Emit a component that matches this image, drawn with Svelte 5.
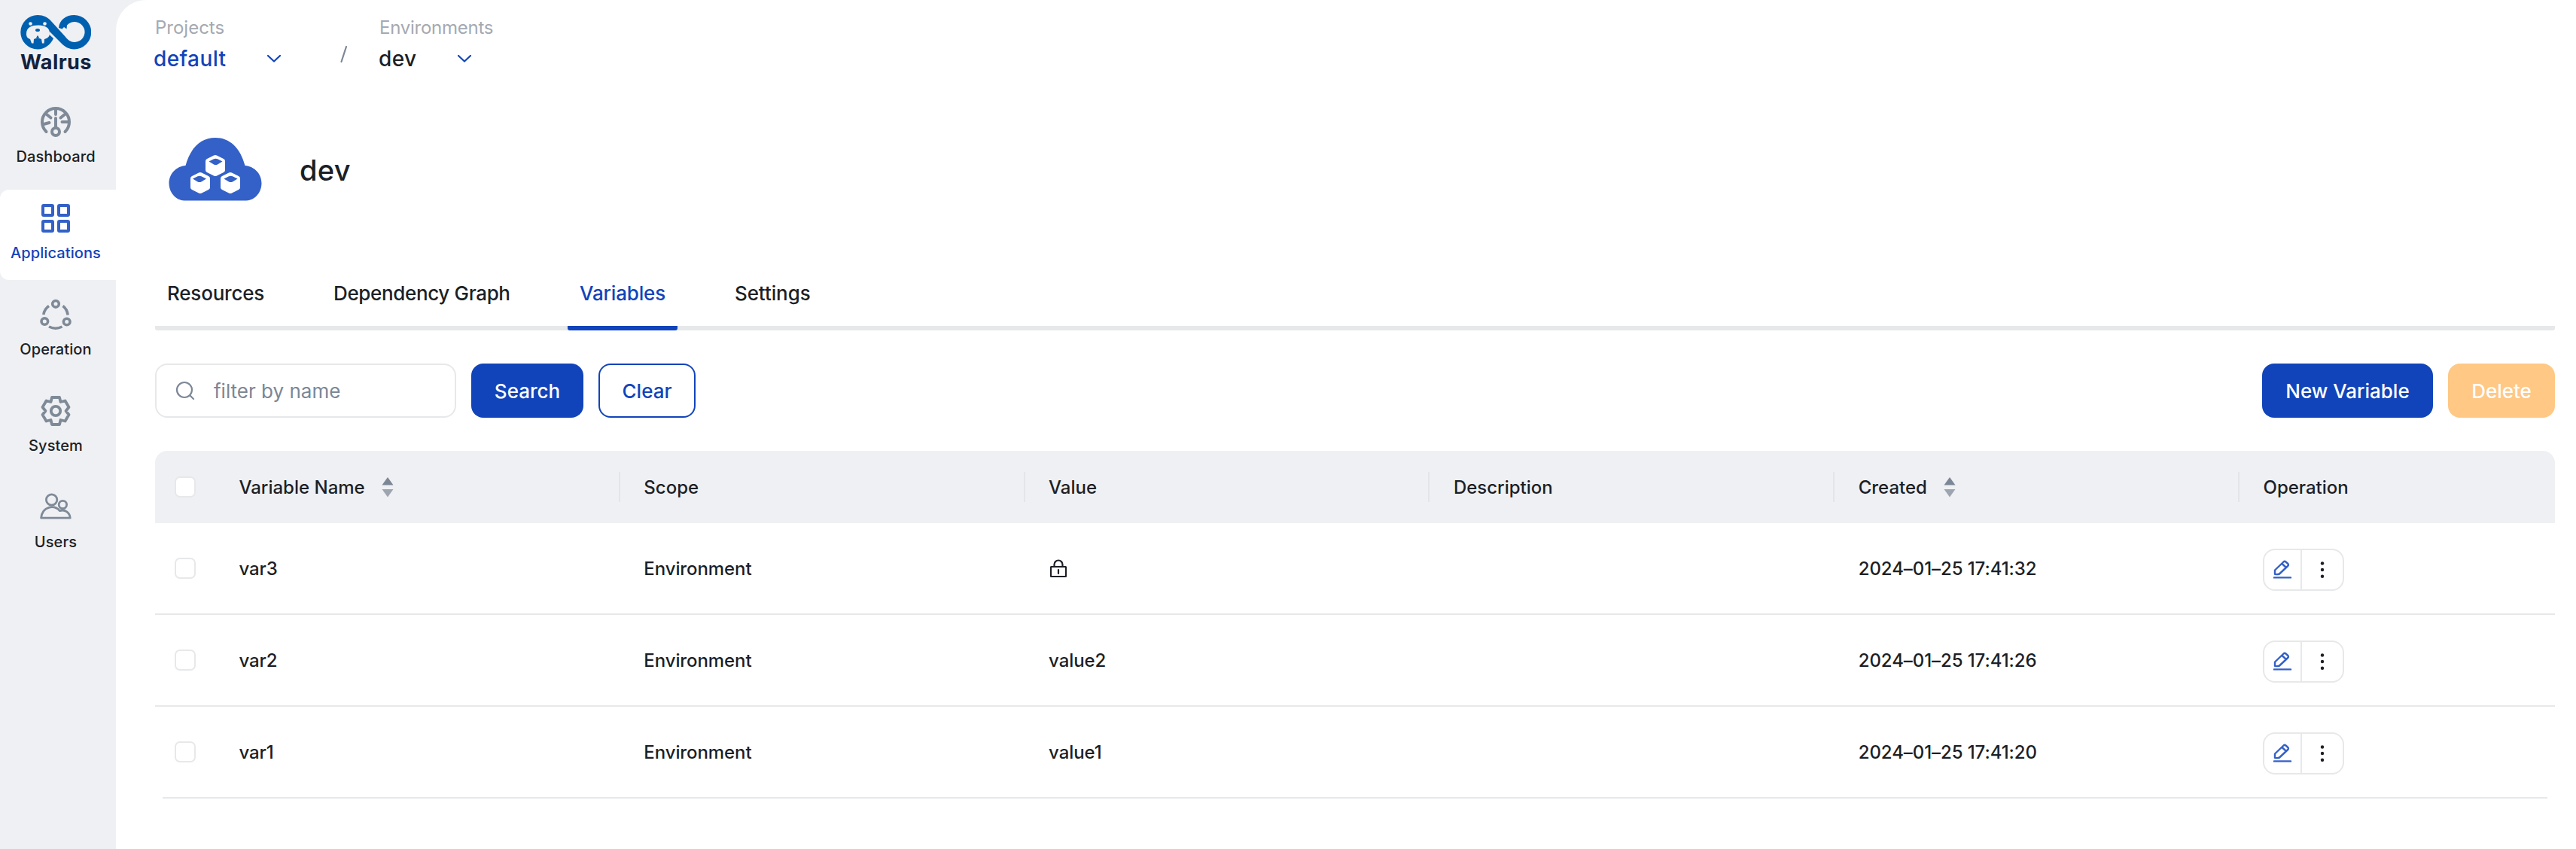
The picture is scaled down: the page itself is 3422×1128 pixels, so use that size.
<script>
  const nav = [
    { id: 'dashboard', label: 'Dashboard' },
    { id: 'applications', label: 'Applications', active: true },
    { id: 'operation', label: 'Operation' },
    { id: 'system', label: 'System' },
    { id: 'users', label: 'Users' }
  ];
  const tabs = ['Resources', 'Dependency Graph', 'Variables', 'Settings'];
  const activeTab = 'Variables';
  const columns = [
    { title: 'Variable Name', sortable: true },
    { title: 'Scope' },
    { title: 'Value' },
    { title: 'Description' },
    { title: 'Created', sortable: true },
    { title: 'Operation' }
  ];
  const rows = [
    { name: 'var3', scope: 'Environment', secret: true, created: '2024–01–25 17:41:32' },
    { name: 'var2', scope: 'Environment', value: 'value2', created: '2024–01–25 17:41:26' },
    { name: 'var1', scope: 'Environment', value: 'value1', created: '2024–01–25 17:41:20' }
  ];
</script>

{#snippet chevron()}
  <svg class="chevron" width="20" height="12" viewBox="0 0 20 12"><path d="M2 2l8 7.5L18 2" /></svg>
{/snippet}

<div class="app">
  <aside>
    <div class="logo">
      <svg width="94" height="46" viewBox="0 0 94 46">
        <path fill="#0060b0" fill-rule="evenodd" d="M23 0C31 0 36 3 40 7L60 29C63 33 67 36 71.500 36A13.500 13.500 0 1 0 62 13.500L61.500 18.500L58 16L55.500 18.500L51 17C52 6 61 0 71.500 0A22.700 22.700 0 1 1 71.500 45.400C64 45.400 59 42 55 38L39 22L38.500 26L44 31C40 40 32 45.400 23 45.400A22.700 22.700 0 0 1 23 0Z" />
        <path fill="#eff0f3" d="M8 25C8 16 15 13.500 24 13.500C33 13.500 39 17 39 24C39 29 36 31 32 32L31.500 37.500H29L28 32L23 30L18 32L17.500 37.500H15L13 32C10 31 8 29 8 25Z" />
        <circle cx="13.500" cy="11.500" r="2.300" fill="#eff0f3" /><circle cx="32.500" cy="11.500" r="2.300" fill="#eff0f3" />
        <ellipse cx="23" cy="20" rx="3" ry="2" fill="#0060b0" />
        <path d="M21 30l2-3 2 3z" fill="#0060b0" />
      </svg>
      <span class="brand">Walrus</span>
    </div>
    <nav>
      {#each nav as item}
        <a class="item {item.id}" class:active={item.active}>
          <svg width="44" height="44" viewBox="0 0 44 44">
            {#if item.id === 'dashboard'}
              <g stroke-width="4">
                <path d="M9.500 35A18 18 0 1 1 34.500 35" />
                <path d="M22 5v7M10 12l5.500 4.500M34 12l-5.500 4.500M6 25l7.500-2M38 22h-7.500M22 17v13" />
                <circle cx="22" cy="35" r="5" />
              </g>
            {:else if item.id === 'applications'}
              <g stroke-width="4">
                <rect x="5" y="5" width="13" height="13" rx="1" /><rect x="26" y="5" width="13" height="13" rx="1" />
                <rect x="5" y="26" width="13" height="13" rx="1" /><rect x="26" y="26" width="13" height="13" rx="1" />
              </g>
            {:else if item.id === 'operation'}
              <g stroke-width="3.600">
                <circle cx="22" cy="7.800" r="4.300" /><circle cx="7.300" cy="31" r="4.300" /><circle cx="36.700" cy="31.500" r="4.300" />
                <path stroke-linecap="butt" d="M5.800 22Q7 14.500 13 10.500M31.500 10.500Q37 14.500 38.200 22.500M13 38Q22 42.500 30.500 38" />
              </g>
            {:else if item.id === 'system'}
              <g stroke-width="3.800">
                <path d="M17 4h10l1.500 6 6-1.500 5 8.500-4 5 4 5-5 8.500-6-1.500L27 40H17l-1.500-6-6 1.500-5-8.500 4-5-4-5 5-8.500 6 1.500z" />
                <circle cx="22" cy="22" r="6.200" />
              </g>
            {:else}
              <g stroke-width="2.800">
                <circle cx="16.600" cy="12" r="7.200" /><circle cx="31.400" cy="18.500" r="5.200" />
                <path d="M2.600 36.200h38.600c-.5-7-7-12-13.700-9.500C20 18.500 4.500 20 2.600 36.200z" />
              </g>
            {/if}
          </svg>
          <span>{item.label}</span>
        </a>
      {/each}
    </nav>
  </aside>

  <main>
    <header>
      <div class="crumb project">
        <small>Projects</small>
        <div class="pick blue"><span>default</span>{@render chevron()}</div>
      </div>
      <svg class="slash" width="12" height="26" viewBox="0 0 12 26"><path d="M2.500 23L9 3" /></svg>
      <div class="crumb">
        <small class="tight">Environments</small>
        <div class="pick env"><span>dev</span>{@render chevron()}</div>
      </div>
    </header>

    <section class="title">
      <svg width="124" height="84" viewBox="0 0 124 84">
        <path fill="#3461c7" d="M22.500 37C29 13 43 0 62 0s33 13 39.500 37C114 38 123.500 48 123.500 60.500S114 83.500 103 83.500H21C10 83.500.5 73 .5 60.500S10 38 22.500 37z" />
        {#each [[62, 37, 0.5], [42, 60, -1], [82, 60, 0.5]] as [x, y, dx]}
          <g transform="translate({x} {y})">
            <path fill="#fff" d="M-2-13.500Q0-14.500 2-13.500L11-9Q13-8 13-6V6Q13 8 11 9L2 13.600Q0 14.600-2 13.600L-11 9Q-13 8-13 6V-6Q-13-8-11-9z" />
            <path fill="#3461c7" transform="translate({dx} 0)" d="M-9-5.500L-2.500-8.800Q0-9.800 2.500-8.800L9-5.500L2.500-1.500Q0-.3-2.500-1.500z" />
          </g>
        {/each}
      </svg>
      <h1>dev</h1>
    </section>

    <div class="tabs">
      {#each tabs as tab}
        <div class="tab" class:current={tab === activeTab}><span>{tab}</span></div>
      {/each}
    </div>

    <div class="toolbar">
      <div class="search">
        <svg width="26" height="26" viewBox="0 0 26 26"><circle cx="12" cy="12" r="10" /><path d="M19.500 19.500L24 24" /></svg>
        <span>filter by name</span>
      </div>
      <button class="primary w-search">Search</button>
      <button class="outline">Clear</button>
      <div class="spacer"></div>
      <button class="primary w-new">New Variable</button>
      <button class="danger">Delete</button>
    </div>

    <div class="table">
      <div class="row head">
        <div class="check"><i></i></div>
        {#each columns as col}
          <div class="cell">
            <span>{col.title}</span>
            {#if col.sortable}
              <svg class="sort" width="16" height="28" viewBox="0 0 16 28">
                <path fill="#7c8796" d="M8 1l7.500 10.500H.5z" /><path fill="#9fa5b0" d="M8 27.500L.5 17h15z" />
              </svg>
            {/if}
          </div>
        {/each}
      </div>
      {#each rows as row}
        <div class="row">
          <div class="check"><i></i></div>
          <div class="cell">{row.name}</div>
          <div class="cell">{row.scope}</div>
          <div class="cell">
            {#if row.secret}
              <svg class="lock" width="26" height="26" viewBox="0 0 24 26">
                <rect x="2" y="11" width="20" height="13" rx=".5" /><path d="M6.500 11V8a5.500 5.500 0 0 1 11 0v3M12 15v5" />
              </svg>
            {:else}{row.value}{/if}
          </div>
          <div class="cell"></div>
          <div class="cell date">{row.created}</div>
          <div class="cell ops">
            <div class="group">
              <div class="edit">
                <svg width="26" height="26" viewBox="0 0 26 26">
                  <path d="M3 18.800V13.500L14.500 2.500Q16 1.200 17.500 2.500L20.300 5Q21.500 6.500 20.200 8L9 18.500Q6 19.500 3 18.800zM12.500 5l5.500 5M2 23.400h22" />
                </svg>
              </div>
              <div class="more">
                <svg width="6" height="24" viewBox="0 0 6 24"><circle cx="3" cy="3.500" r="2.200" /><circle cx="3" cy="12" r="2.200" /><circle cx="3" cy="20.800" r="2.200" /></svg>
              </div>
            </div>
          </div>
        </div>
      {/each}
    </div>
  </main>
</div>

<style>
  * { box-sizing: border-box; }
  .app { display: flex; width: 3422px; height: 1128px; background: #eff0f3; font-family: Inter, "Liberation Sans", sans-serif; font-size: 24px; font-weight: 450; color: #1c1f26; overflow: hidden; white-space: nowrap; }
  svg { display: block; flex: none; fill: none; stroke-linecap: round; stroke-linejoin: round; }
  aside { width: 154px; flex: none; }
  .logo { height: 124px; padding: 20px 0 0 27px; }
  .brand { display: block; margin-top: 1px; font-size: 27px; line-height: 32px; font-weight: 700; letter-spacing: 0.400px; color: #14213d; }
  nav { display: flex; flex-direction: column; gap: 8px; }
  .item { height: 120px; padding: 16px 6px 0 0; display: flex; flex-direction: column; align-items: center; gap: 12px; font-size: 20px; line-height: 24px; letter-spacing: 0.100px; border-radius: 12px 0 0 12px; }
  .item svg { stroke: #7f8a98; }
  .item.active { background: #fff; color: #1144ba; }
  .item.active svg { stroke: #3461c7; }
  main { flex: 1; background: #fff; border-top-left-radius: 40px; padding: 0 28px 0 52px; }
  header { display: flex; height: 183px; padding-top: 21px; }
  .crumb small { display: block; font-size: 24px; line-height: 32px; font-weight: 400; color: #a4a9b2; }
  .tight { letter-spacing: -0.250px; }
  .pick { display: flex; align-items: center; font-size: 28px; line-height: 36px; margin: 7px 0 0 -2px; letter-spacing: 0.400px; }
  .project { width: 246px; }
  .blue { color: #1144ba; }
  .pick span { width: 150px; }
  .pick.env { margin-left: -1px; }
  .env span { width: 104px; }
  .chevron { stroke: #1144ba; stroke-width: 2.200; }
  .slash { margin: 38px 41px 0 -1px; stroke: #7c8796; stroke-width: 2.200; }
  .title { display: flex; height: 161px; padding-left: 18px; gap: 50px; }
  h1 { margin: 19px 0 0; font-size: 38px; line-height: 48px; font-weight: 450; letter-spacing: 0.300px; }
  .tabs { display: flex; gap: 60px; height: 95px; font-size: 26px; letter-spacing: -0.100px; border-bottom: 6px solid #e7e8ea; border-radius: 3px; }
  .tab { padding: 30px 16px 0; height: 95px; line-height: 32px; }
  .current { color: #1144ba; border-bottom: 6px solid #1144ba; border-radius: 3px; }
  .tab:nth-child(1) { width: 161px; letter-spacing: -0.200px; }
  .tab:nth-child(2) { width: 267px; letter-spacing: -0.350px; }
  .tab:nth-child(3) { width: 146px; letter-spacing: -0.150px; }
  .toolbar { display: flex; margin-top: 44px; height: 72px; gap: 20px; }
  .search { width: 400px; border: 2px solid #e7e8ea; border-radius: 16px; display: flex; align-items: center; gap: 25px; padding-left: 25px; font-size: 26px; font-weight: 400; color: #7c8796; }
  .search svg { stroke: #7c8796; stroke-width: 2.200; }
  button { height: 72px; padding: 0; border: 0; border-radius: 16px; font: 450 26px/73px Inter, sans-serif; letter-spacing: 0; color: #fff; }
  .primary { background: #1144ba; }
  .w-search { width: 149px; }
  .w-new { width: 227px; }
  .outline { width: 129px; background: #fff; border: 2px solid #1144ba; color: #1144ba; line-height: 69px; }
  .danger { width: 142px; background: #ffc884; }
  .spacer { flex: 1; }
  .table { margin-top: 44px; }
  .row { display: grid; grid-template-columns: 80px repeat(5, 537.800px) 1fr; height: 122px; border-bottom: 2px solid #e7e8ea; align-items: center; letter-spacing: -0.080px; }
  .row:last-child { border-color: transparent; background: linear-gradient(#e7e8ea, #e7e8ea) center bottom / calc(100% - 20px) 2px no-repeat border-box; }
  .head { height: 96px; border: 0; border-radius: 16px 16px 0 0; background: #eff0f3; letter-spacing: 0; }
  .check { padding-left: 26px; }
  .check i { display: block; width: 28px; height: 28px; border: 2px solid #e7e8ea; border-radius: 7px; background: #fff; }
  .cell { padding-left: 31.500px; display: flex; align-items: center; height: 40px; }
  .head .cell { border-right: 2px solid #e4e5e8; }
  .head .cell:last-child { border: 0; }
  .sort { margin-left: 22px; }
  .lock { stroke: #1c1f26; stroke-width: 2.200; }
  .group { display: flex; width: 108px; height: 56px; border: 2px solid #e7e8ea; border-radius: 16px; }
  .row .ops { padding-left: 31px; margin-top: 4px; }
  .edit { width: 50px; border-right: 2px solid #e7e8ea; display: flex; align-items: center; justify-content: center; }
  .edit svg { stroke: #3461c7; stroke-width: 2.400; }
  .more { flex: 1; display: flex; align-items: center; justify-content: center; }
  .more svg { fill: #1c1f26; }
</style>
